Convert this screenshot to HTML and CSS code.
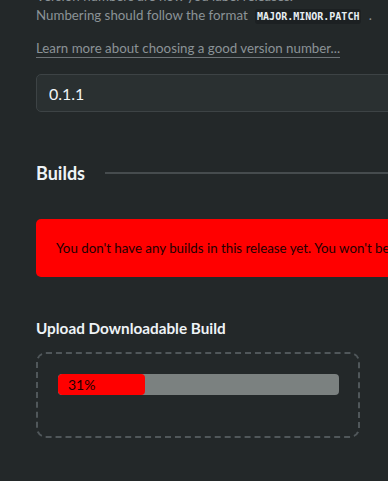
FILE: index.html
```html
<!DOCTYPE html>
<html lang="en">
<head>
<meta charset="utf-8">
<meta name="viewport" content="width=device-width, initial-scale=1.0">
<title>Edit Release</title>
<link rel="stylesheet" href="styles.css">
</head>
<body>
  <div class="page">
    <div class="field">
      <p class="help">Version numbers are how you label releases.<br>
        Numbering should follow the format <code>MAJOR.MINOR.PATCH</code> .</p>
      <p class="help-link"><a href="#">Learn more about choosing a good version number...</a></p>
      <input class="text-input" type="text" value="0.1.1">
    </div>

    <div class="section-title">
      <h2>Builds</h2>
      <span class="rule"></span>
    </div>

    <div class="alert">You don't have any builds in this release yet. You won't be able to publish it until you upload one.</div>

    <h3 class="sub-title">Upload Downloadable Build</h3>
    <div class="dropzone">
      <div class="progress">
        <div class="progress-fill" style="width: 31%">31%</div>
      </div>
    </div>
  </div>
</body>
</html>
```

FILE: styles.css
```css
* {
  margin: 0;
  padding: 0;
  box-sizing: border-box;
}
html, body {
  overflow: hidden;
}
body {
  background-color: #232829;
  font-family: Lato, "Noto Sans", sans-serif;
  color: #8b9397;
}
.page {
  width: 480px;
  padding-left: 36px;
  margin-top: -13px;
}
.help {
  font-size: 13.3px;
  line-height: 19px;
}
code {
  font-family: "DejaVu Sans Mono", monospace;
  font-size: 10px;
  font-weight: bold;
  color: #e8eef2;
  background-color: #1c2022;
  padding: 2px 2px;
  margin: 0 4px;
  border-radius: 3px;
}
.help-link {
  margin-top: 13px;
  font-size: 13.3px;
  line-height: 19px;
}
.help-link a {
  color: #8b9397;
  text-decoration: none;
  border-bottom: 1px solid #6d7377;
  padding-bottom: 1px;
}
.text-input {
  display: block;
  width: 100%;
  height: 38px;
  margin-top: 16px;
  padding: 0 12px;
  background-color: #2a3031;
  border: 1px solid #3d4345;
  border-radius: 5px;
  color: #f2f5f7;
  font-family: Lato, sans-serif;
  font-size: 16px;
}
.section-title {
  display: flex;
  align-items: center;
  gap: 20px;
  margin-top: 50px;
}
.section-title h2 {
  font-family: Lato, sans-serif;
  font-size: 18px;
  font-weight: bold;
  color: #eef3f6;
}
.rule {
  flex: 1;
  height: 2px;
  background-color: #464c4e;
}
.alert {
  margin-top: 35px;
  background-color: #ff0000;
  color: #230000;
  border-radius: 5px;
  padding: 19px 20px;
  font-size: 13.3px;
  line-height: 20px;
  white-space: nowrap;
  overflow: hidden;
}
.sub-title {
  margin-top: 42px;
  font-family: Lato, sans-serif;
  font-size: 15.3px;
  font-weight: bold;
  color: #eef3f6;
}
.dropzone {
  width: 324px;
  margin-top: 15px;
  border: 2px dashed #50575a;
  border-radius: 10px;
  padding: 20px 19px 41px 20px;
}
.progress {
  height: 21px;
  background-color: #7b8180;
  border-radius: 4px;
  overflow: hidden;
}
.progress-fill {
  height: 100%;
  background-color: #ff0000;
  color: #1e0000;
  border-radius: 4px;
  font-size: 14px;
  line-height: 21px;
  padding-left: 10px;
}
```
